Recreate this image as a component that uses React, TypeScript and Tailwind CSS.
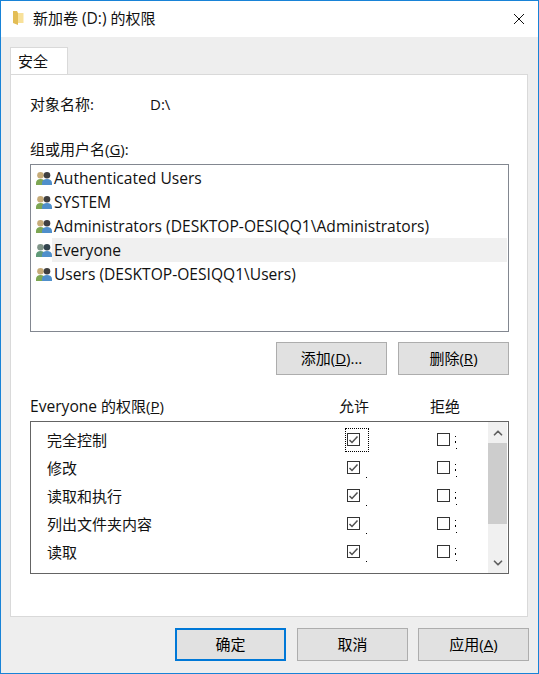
import { ChevronDown, ChevronUp } from "lucide-react";

const FONT = "font-['Open_Sans','Noto_Sans_CJK_SC',sans-serif]";

const USERS = [
  "Authenticated Users",
  "SYSTEM",
  "Administrators (DESKTOP-OESIQQ1\\Administrators)",
  "Everyone",
  "Users (DESKTOP-OESIQQ1\\Users)",
];

const PERMS = ["完全控制", "修改", "读取和执行", "列出文件夹内容", "读取"];

function FolderIcon() {
  return (
    <svg width="11" height="14" viewBox="0 0 11 14" className="mb-[2px] shrink-0">
      <path d="M0 0h4l1 2v12l-5-2z" fill="#e3bd55" />
      <path d="M5 2h5.500v10H5z" fill="#f8e19a" />
    </svg>
  );
}

function UserIcon({ dim }: { dim?: boolean }) {
  return (
    <svg width="16" height="13" viewBox="0 0 16 13" className="shrink-0">
      <circle cx="4.500" cy="3.300" r="3.300" fill={dim ? "#7f9488" : "#c6ab78"} />
      <path d="M0 13v-2c0-2.500 2-4 4.500-4S9 8.500 9 11v2z" fill={dim ? "#5f9a78" : "#7da653"} />
      <circle cx="11" cy="3.300" r="3.300" fill={dim ? "#33454f" : "#3f3f40"} />
      <path d="M6 13v-2c0-2.500 2.200-4 5-4s5 1.500 5 4v2z" fill="#4f8fcb" />
    </svg>
  );
}

function Check({ checked, focused, dots }: { checked?: boolean; focused?: boolean; dots?: "allow" | "deny" }) {
  return (
    <div className={`relative flex h-[24px] w-[24px] items-center pb-[1px] pl-[1px] ${focused ? "border border-dotted border-black" : "border border-transparent"}`}>
      <div className="flex h-[13px] w-[13px] items-center justify-center border border-[#333333] bg-white">
        {checked && (
          <svg width="11" height="11" viewBox="0 0 11 11">
            <path d="M1.500 6 L4 8.500 L9.500 2.500" fill="none" stroke="#505050" strokeWidth="1.500" />
          </svg>
        )}
      </div>
      {dots === "allow" && <div className="absolute left-[20px] top-[20px] h-[1px] w-[1px] bg-black" />}
      {dots === "deny" && (
        <>
          <div className="absolute left-[19px] top-[7px] h-[1px] w-[1px] bg-black" />
          <div className="absolute left-[19px] top-[12px] h-[2px] w-[1px] bg-black" />
          <div className="absolute left-[20px] top-[19px] h-[1px] w-[1px] bg-black" />
        </>
      )}
    </div>
  );
}

function Btn({ children, primary }: { children: React.ReactNode; primary?: boolean }) {
  return (
    <button
      className={`flex h-[33px] w-[111px] items-center justify-center bg-[#e1e1e1] pb-[2px] text-[15px] text-black ${
        primary ? "mr-[1px] border-[2px] border-[#0078d7]" : "border border-[#adadad]"
      }`}
    >
      {children}
    </button>
  );
}

export default function App() {
  return (
    <div className={`flex h-[674px] w-[539px] flex-col overflow-hidden border border-[#1883d7] bg-[#eeeeee] text-[15px] leading-[20px] text-[#111111] ${FONT}`}>
      {/* title bar */}
      <div className="flex h-[36px] shrink-0 items-center bg-white pl-[12px] pr-[13px]">
        <FolderIcon />
        <span className="mb-[2px] ml-[9px] flex-1">
          新加卷 <span className="text-[15.600px]">(D:)</span> 的权限
        </span>
        <svg width="12" height="12" viewBox="0 0 12 12">
          <path d="M1 1l10 10M11 1L1 11" stroke="#111111" strokeWidth="1" />
        </svg>
      </div>

      {/* tab */}
      <div className="ml-[9px] mt-[10px] flex h-[27px] w-[58px] shrink-0 items-center border border-b-0 border-[#d9d9d9] bg-white pb-[1px] pl-[7px]">
        安全
      </div>

      {/* panel */}
      <div className="ml-[9px] h-[543px] w-[518px] shrink-0 border border-[#d9d9d9] bg-white pl-[19px] pr-[19px]">
        <div className="mt-[19px] flex h-[20px]">
          <span className="w-[120px]">对象名称:</span>
          <span>D:\</span>
        </div>
        <div className="mt-[25px] h-[20px]">
          组或用户名(<span className="underline">G</span>):
        </div>
        <div className="mt-[5px] h-[168px] w-[479px] border border-[#828790] bg-white pl-[1px] pr-[1px] pt-[1px]">
          {USERS.map((u) => (
            <div key={u} className="flex h-[24px] items-center">
              <div className="flex w-[20px] justify-end">
                <UserIcon dim={u === "Everyone"} />
              </div>
              <span className={`flex h-full flex-1 items-center pl-[2px] text-[15.600px] ${u === "Everyone" ? "bg-[#f0f0f0]" : ""}`}>{u}</span>
            </div>
          ))}
        </div>
        <div className="mt-[10px] flex w-[479px] justify-end gap-[11px]">
          <Btn>
            添加(<span className="underline">D</span>)...
          </Btn>
          <Btn>
            删除(<span className="underline">R</span>)
          </Btn>
        </div>
        <div className="mt-[21px] flex h-[20px] w-[479px]">
          <span className="w-[309px]">
            <span className="text-[15.600px]">Everyone</span> 的权限(<span className="underline">P</span>)
          </span>
          <span className="w-[91px]">允许</span>
          <span>拒绝</span>
        </div>
        <div className="mt-[5px] flex h-[153px] w-[479px] border border-[#646464] bg-white">
          <div className="flex-1 pt-[4px]">
            {PERMS.map((p, i) => (
              <div key={p} className="flex h-[28px] items-center">
                <span className="w-[314px] pl-[16px]">{p}</span>
                <div className="w-[90px]">
                  <Check checked focused={i === 0} dots={i === 0 ? undefined : "allow"} />
                </div>
                <Check dots="deny" />
              </div>
            ))}
          </div>
          <div className="mr-[1px] flex w-[19px] shrink-0 flex-col items-center bg-[#f0f0f0]">
            <div className="flex h-[21px] items-center justify-center">
              <ChevronUp size={14} strokeWidth={3} className="text-[#606060]" />
            </div>
            <div className="h-[81px] w-full bg-[#cdcdcd]" />
            <div className="flex-1" />
            <div className="flex h-[21px] items-center justify-center">
              <ChevronDown size={14} strokeWidth={3} className="text-[#606060]" />
            </div>
          </div>
        </div>
      </div>

      {/* footer buttons */}
      <div className="mt-[11px] flex justify-end gap-[10px] pr-[9px]">
        <Btn primary>确定</Btn>
        <Btn>取消</Btn>
        <Btn>
          应用(<span className="underline">A</span>)
        </Btn>
      </div>
    </div>
  );
}
